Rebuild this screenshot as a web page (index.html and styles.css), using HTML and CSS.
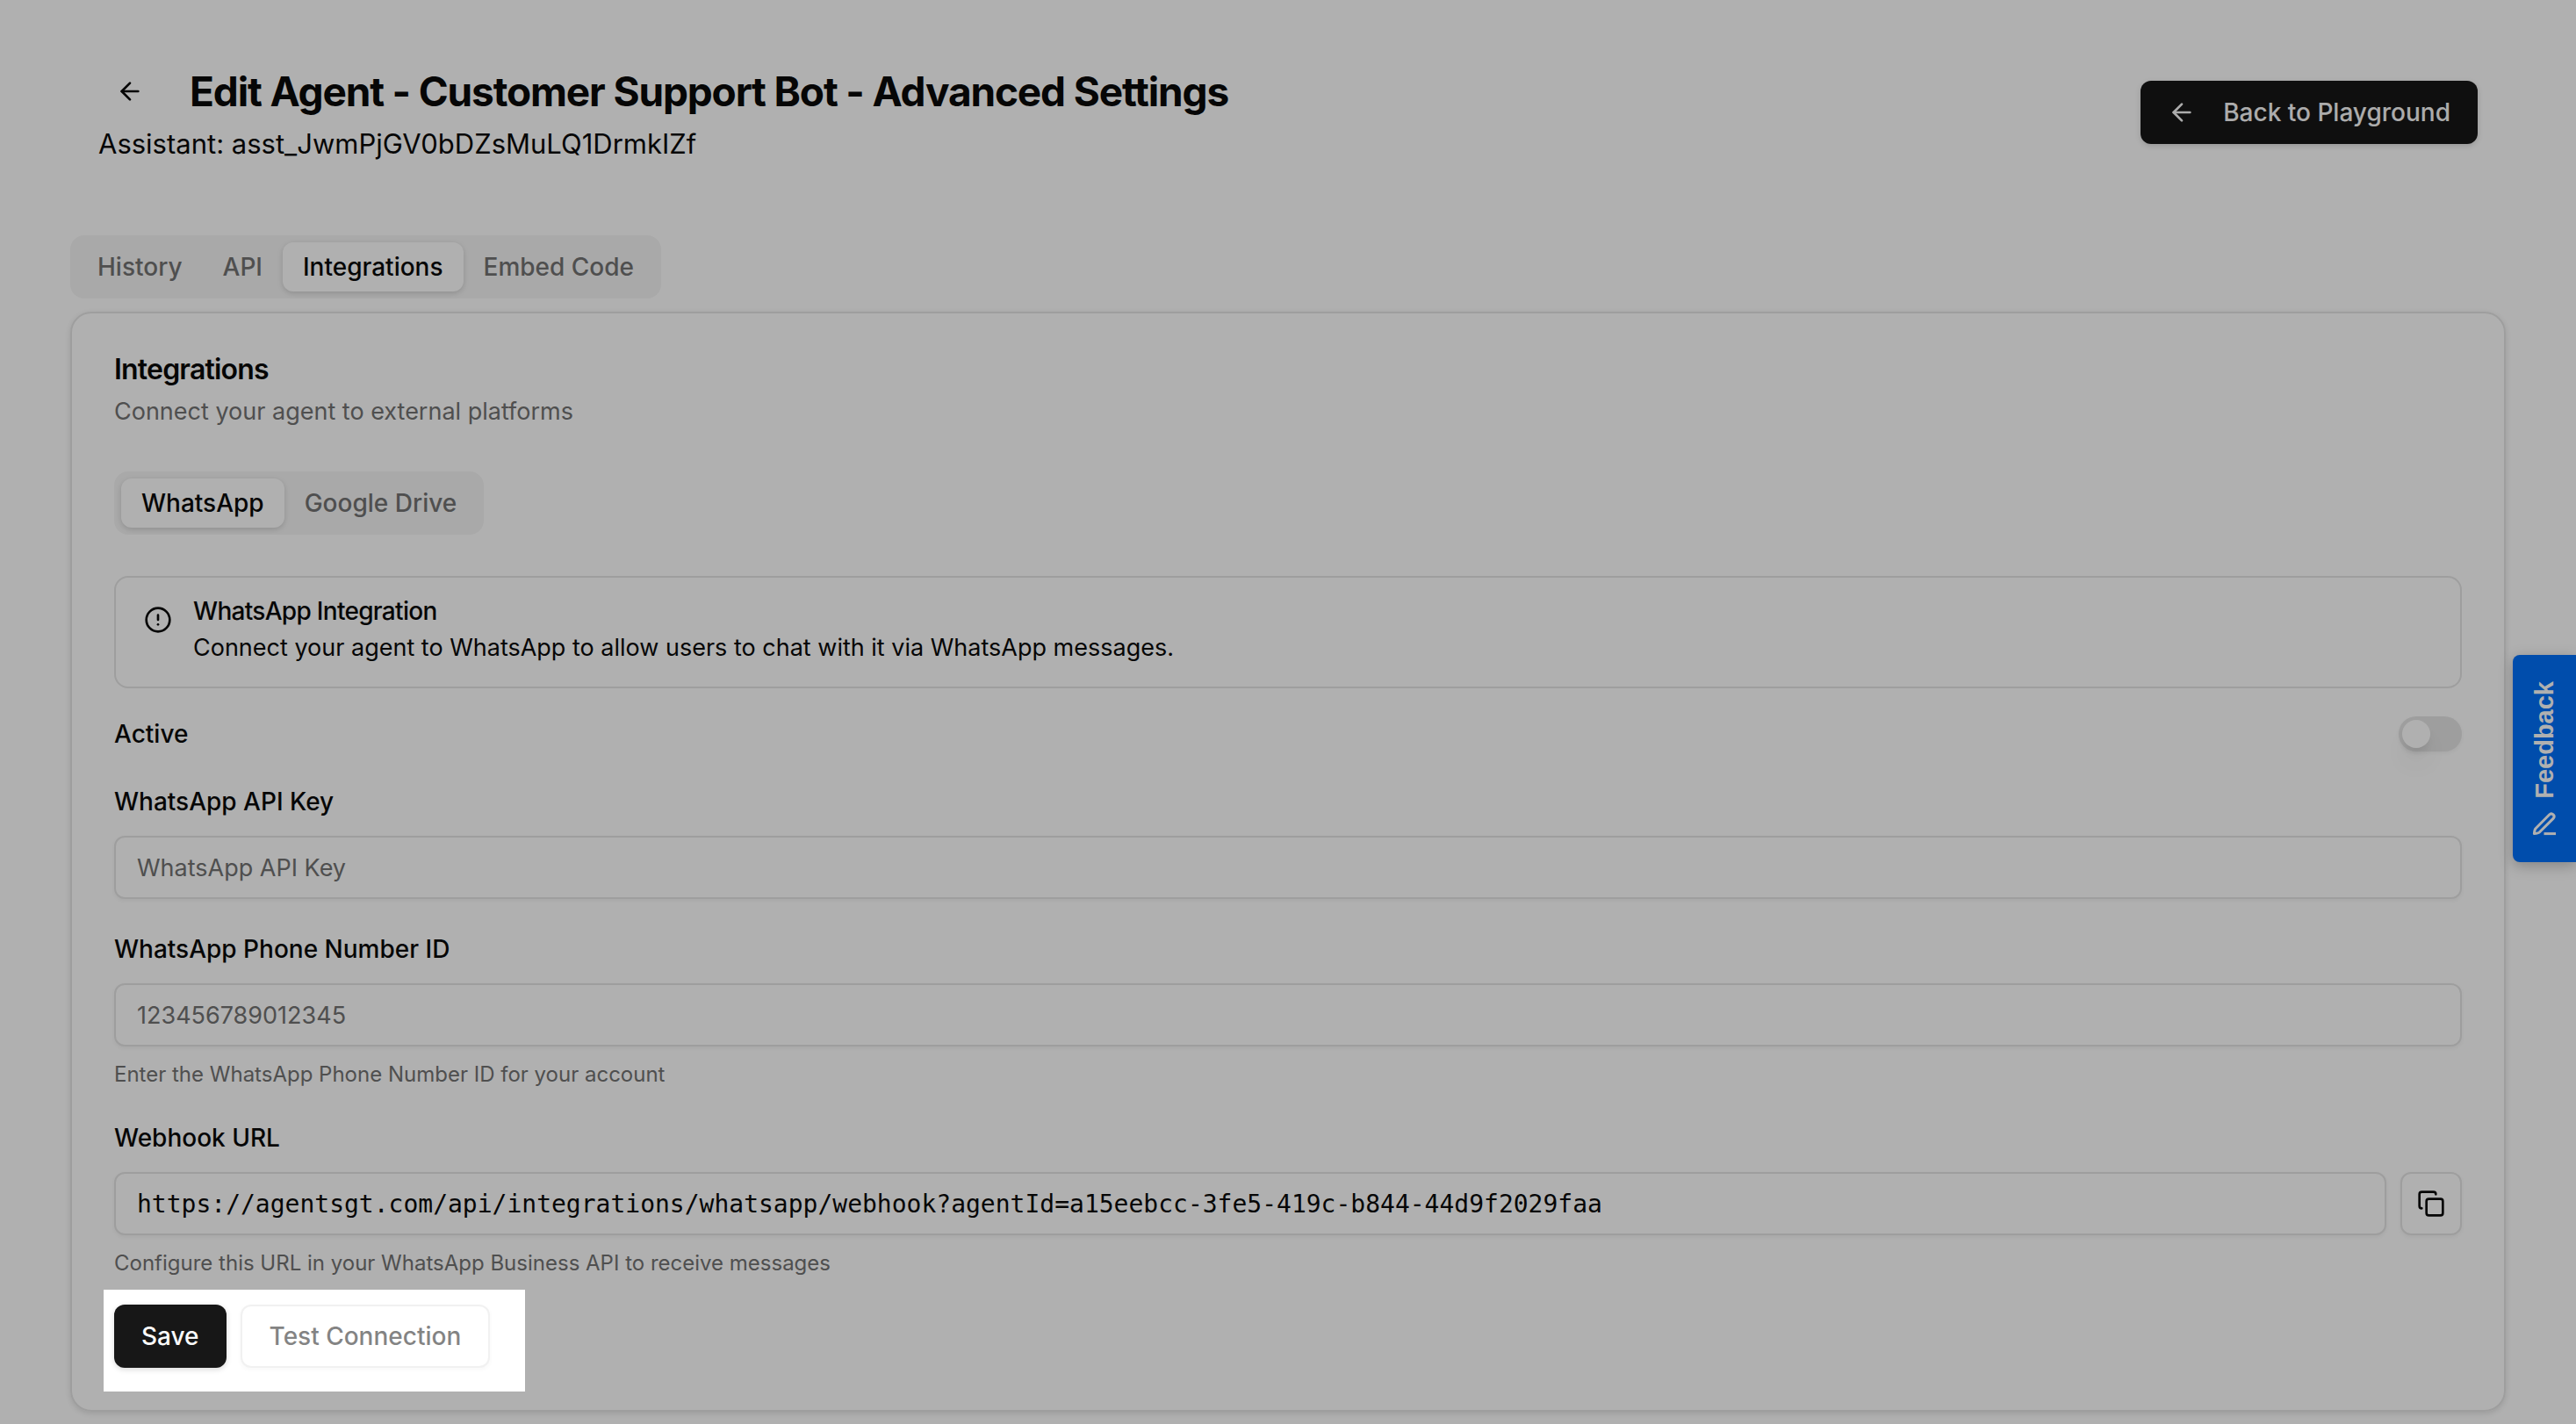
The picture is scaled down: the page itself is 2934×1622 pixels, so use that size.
FILE: index.html
```
<!DOCTYPE html>
<html lang="en">
<head>
    <meta charset="UTF-8">
    <meta name="viewport" content="width=device-width, initial-scale=1.0">
    <title>Edit Agent - Advanced Settings</title>
    <link rel="stylesheet" href="styles.css">
</head>
<body>

    <main class="page">
        <header class="page-header">
            <div class="heading">
                <div class="title-row">
                    <a class="icon-link" href="#" aria-label="Back">
                        <svg class="icon" viewBox="0 0 24 24"><path d="m12 19-7-7 7-7"/><path d="M19 12H5"/></svg>
                    </a>
                    <h1>Edit Agent - Customer Support Bot - Advanced Settings</h1>
                </div>
                <p class="assistant-id">Assistant: asst_JwmPjGV0bDZsMuLQ1DrmkIZf</p>
            </div>
            <a class="btn btn-primary btn-back" href="#">
                <svg class="icon" viewBox="0 0 24 24"><path d="m12 19-7-7 7-7"/><path d="M19 12H5"/></svg>
                Back to Playground
            </a>
        </header>

        <nav class="tabs">
            <button class="tab" type="button">History</button>
            <button class="tab" type="button">API</button>
            <button class="tab active" type="button">Integrations</button>
            <button class="tab" type="button">Embed Code</button>
        </nav>

        <section class="card">
            <h2>Integrations</h2>
            <p class="card-description">Connect your agent to external platforms</p>

            <nav class="tabs">
                <button class="tab active" type="button">WhatsApp</button>
                <button class="tab" type="button">Google Drive</button>
            </nav>

            <form class="integration-form">
                <div class="alert">
                    <svg class="icon" viewBox="0 0 24 24"><circle cx="12" cy="12" r="10"/><path d="M12 8v4"/><path d="M12 16h.01"/></svg>
                    <div>
                        <h3>WhatsApp Integration</h3>
                        <p>Connect your agent to WhatsApp to allow users to chat with it via WhatsApp messages.</p>
                    </div>
                </div>

                <div class="switch-row">
                    <label for="active">Active</label>
                    <input class="switch" type="checkbox" role="switch" id="active">
                </div>

                <div class="field">
                    <label for="api-key">WhatsApp API Key</label>
                    <input class="text-input" type="text" id="api-key" placeholder="WhatsApp API Key">
                </div>

                <div class="field">
                    <label for="phone-id">WhatsApp Phone Number ID</label>
                    <input class="text-input" type="text" id="phone-id" placeholder="123456789012345">
                    <p class="hint">Enter the WhatsApp Phone Number ID for your account</p>
                </div>

                <div class="field">
                    <label for="webhook">Webhook URL</label>
                    <div class="copy-row">
                        <input class="text-input mono" type="text" id="webhook" readonly value="https://agentsgt.com/api/integrations/whatsapp/webhook?agentId=a15eebcc-3fe5-419c-b844-44d9f2029faa">
                        <button class="btn btn-outline btn-copy" type="button" aria-label="Copy">
                            <svg class="icon" viewBox="0 0 24 24"><rect width="14" height="14" x="8" y="8" rx="2"/><path d="M4 16c-1.1 0-2-.9-2-2V4c0-1.1.9-2 2-2h10c1.1 0 2 .9 2 2"/></svg>
                        </button>
                    </div>
                    <p class="hint">Configure this URL in your WhatsApp Business API to receive messages</p>
                </div>

                <div class="actions spotlight">
                    <button class="btn btn-primary" type="submit">Save</button>
                    <button class="btn btn-outline" type="button" disabled>Test Connection</button>
                </div>
            </form>
        </section>
    </main>

    <button class="feedback" type="button">
        <span>Feedback</span>
        <svg viewBox="0 0 28 28"><path d="M2.4 25.6c.2-2.8.4-4.6 1.6-5.9L19.6 4c3-3 7.4 1.3 4.4 4.4L8.3 24c-1.3 1.2-3.1 1.4-5.9 1.6z"/><path d="M13.5 25.6H27"/></svg>
    </button>

</body>
</html>
```
FILE: styles.css
```
* {
    box-sizing: border-box;
}

body {
    margin: 0;
    background: white;
    color: #0a0a0a;
    font-family: Inter, "Liberation Sans", sans-serif;
    font-size: 32px;
    line-height: 48px;
}

h1, h2, h3, p {
    margin: 0;
}

button, input {
    font-family: inherit;
}

.page {
    padding: 68px 80px 14px;
}

.icon {
    width: 32px;
    height: 32px;
    flex-shrink: 0;
    fill: none;
    stroke: currentColor;
    stroke-width: 2;
    stroke-linecap: round;
    stroke-linejoin: round;
}

/* header */
.page-header {
    display: flex;
    justify-content: space-between;
    align-items: center;
    padding: 0 32px;
    margin-bottom: 80px;
}

.title-row {
    display: flex;
    align-items: center;
    gap: 32px;
}

.title-row h1 {
    font-size: 46px;
    font-weight: 700;
    line-height: 64px;
    letter-spacing: -0.025em;
}

.assistant-id {
    font-size: 31px;
}

.icon-link {
    display: flex;
    align-items: center;
    justify-content: center;
    width: 72px;
    height: 72px;
    color: inherit;
}

/* buttons */
.btn {
    display: inline-flex;
    align-items: center;
    justify-content: center;
    height: 72px;
    padding: 0 31px;
    border: none;
    border-radius: 12px;
    font-size: 28px;
    font-weight: 500;
    line-height: 40px;
    white-space: nowrap;
    text-decoration: none;
    cursor: pointer;
}

.btn-primary {
    background: #171717;
    color: #fafafa;
    box-shadow: 0 2px 6px rgba(0, 0, 0, 0.15);
}

.btn-outline {
    background: white;
    color: #0a0a0a;
    border: 2px solid #e5e5e5;
    box-shadow: 0 2px 4px rgba(0, 0, 0, 0.05);
}

.btn:disabled {
    opacity: 0.5;
}

.btn-back {
    gap: 31px;
}

.btn-copy {
    width: 70px;
    padding: 0;
    flex-shrink: 0;
}

/* tabs */
.tabs {
    display: flex;
    width: fit-content;
    padding: 8px;
    border-radius: 16px;
    background: #f5f5f5;
}

.tab {
    padding: 8px 23px;
    border: none;
    border-radius: 12px;
    background: none;
    color: #737373;
    font-size: 28px;
    font-weight: 500;
    line-height: 40px;
    cursor: pointer;
}

.tab.active {
    background: white;
    color: #0a0a0a;
    box-shadow: 0 2px 6px rgba(0, 0, 0, 0.15);
}

/* card */
.card {
    margin-top: 15px;
    padding: 48px;
    border: 2px solid #e5e5e5;
    border-radius: 24px;
    box-shadow: 0 2px 6px rgba(0, 0, 0, 0.12);
}

.card h2 {
    font-size: 32px;
    font-weight: 600;
    line-height: 32px;
    letter-spacing: -0.025em;
}

.card-description {
    margin: 12px 0 48px;
    color: #737373;
    font-size: 27px;
    line-height: 40px;
}

.integration-form {
    display: flex;
    flex-direction: column;
    gap: 32px;
    margin-top: 47px;
}

.alert {
    display: flex;
    gap: 24px;
    padding: 24px 32px;
    border: 2px solid #e5e5e5;
    border-radius: 16px;
    font-size: 27px;
    line-height: 40px;
}

.alert .icon {
    margin-top: 8px;
}

.alert h3 {
    margin-bottom: 8px;
    font-size: 28px;
    font-weight: 500;
    line-height: 28px;
    letter-spacing: -0.025em;
}

/* form */
label {
    font-size: 28px;
    font-weight: 500;
    line-height: 28px;
}

.switch-row {
    display: flex;
    justify-content: space-between;
    align-items: center;
    height: 40px;
}

.switch {
    appearance: none;
    width: 72px;
    height: 40px;
    margin: 0;
    padding: 4px;
    border-radius: 20px;
    background: #e5e5e5;
    box-shadow: 0 2px 4px rgba(0, 0, 0, 0.05);
    cursor: pointer;
}

.switch::before {
    content: "";
    display: block;
    width: 32px;
    height: 32px;
    border-radius: 50%;
    background: white;
    box-shadow: 0 20px 30px -6px rgba(0, 0, 0, 0.1), 0 8px 12px -4px rgba(0, 0, 0, 0.1);
}

.switch:checked {
    background: #171717;
}

.switch:checked::before {
    margin-left: 32px;
}

.text-input {
    display: block;
    width: 100%;
    height: 72px;
    margin-top: 16px;
    padding: 0 24px;
    border: 2px solid #e5e5e5;
    border-radius: 12px;
    background: white;
    color: #0a0a0a;
    font-size: 27px;
    box-shadow: 0 2px 4px rgba(0, 0, 0, 0.05);
}

.text-input::placeholder {
    color: #737373;
}

.text-input.mono {
    margin-top: 0;
    font-family: "DejaVu Sans Mono", "Liberation Mono", monospace;
    font-size: 28px;
}

.copy-row {
    display: flex;
    gap: 16px;
    margin-top: 16px;
}

.hint {
    margin-top: 16px;
    color: #737373;
    font-size: 24px;
    line-height: 31px;
}

.actions {
    display: flex;
    gap: 16px;
}

/* dims everything around the highlighted area */
.spotlight {
    position: relative;
    width: fit-content;
}

.spotlight::after {
    content: "";
    position: absolute;
    z-index: 20;
    inset: -17px -40px -27px -12px;
    box-shadow: 0 0 0 9999px rgba(0, 0, 0, 0.31);
    pointer-events: none;
}

/* feedback widget */
.feedback {
    position: absolute;
    right: 0;
    top: 746px;
    z-index: 1;
    display: flex;
    flex-direction: column;
    align-items: center;
    gap: 14px;
    width: 72px;
    padding: 30px 0;
    border: none;
    border-radius: 8px 0 0 8px;
    background: #0070f9;
    color: white;
    font-family: "Liberation Sans", Arial, sans-serif;
    font-size: 29px;
    font-weight: 700;
    line-height: 32px;
    box-shadow: 0 4px 16px rgba(0, 0, 0, 0.25);
    cursor: pointer;
}

.feedback span {
    writing-mode: vertical-rl;
    transform: rotate(180deg);
}

.feedback svg {
    width: 28px;
    height: 28px;
    fill: none;
    stroke: currentColor;
    stroke-width: 3;
    stroke-linejoin: round;
}
```
